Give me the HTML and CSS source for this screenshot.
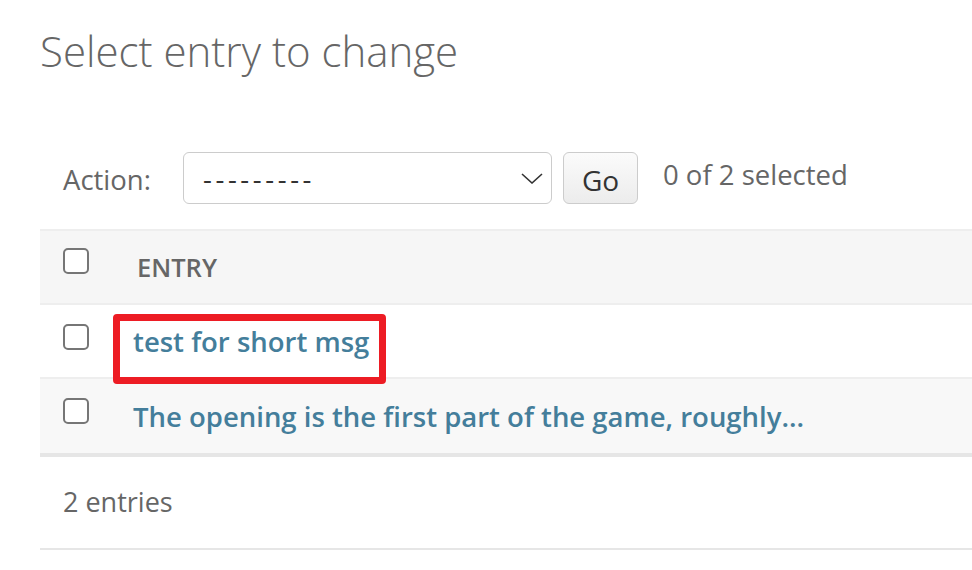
FILE: index.html
```html
<!DOCTYPE html>
<html>
<head>
<meta charset="utf-8">
<link rel="stylesheet" href="styles.css">
</head>
<body>
<div class="content">
  <h1 class="title">Select entry to change</h1>
  <div class="changelist">
    <div class="actions">
      <label class="action-label">Action:</label>
      <div class="select">
        <span class="select-text">---------</span>
        <svg class="chevron" width="22" height="11" viewBox="0 0 22 11"><path d="M1 1 L11 10 L21 1" fill="none" stroke="#333" stroke-width="1.6"/></svg>
      </div>
      <button class="go">Go</button>
      <span class="counter">0 of 2 selected</span>
    </div>
    <div class="results">
      <div class="row head">
        <div class="cb-cell"><span class="cb"></span></div>
        <div class="th">ENTRY</div>
      </div>
      <div class="row odd">
        <div class="cb-cell"><span class="cb"></span></div>
        <div class="td"><a class="link" href="#">test for short msg</a></div>
        <div class="highlight"></div>
      </div>
      <div class="row even last">
        <div class="cb-cell"><span class="cb"></span></div>
        <div class="td"><a class="link" href="#">The opening is the first part of the game, roughly...</a></div>
      </div>
    </div>
    <p class="paginator">2 entries</p>
  </div>
</div>
</body>
</html>
```
FILE: styles.css
```css
* { box-sizing: border-box; }
html, body { margin: 0; padding: 0; background: #fff; overflow: hidden; }
body {
  font-family: "Open Sans", "Noto Sans", sans-serif;
  color: #666;
  width: 972px;
  height: 570px;
}
.content {
  padding-left: 40px;
  width: 1100px;
}
.title {
  margin: 0;
  padding-top: 21px;
  height: 152px;
  font-weight: 300;
  font-size: 42px;
  line-height: 60px;
  color: #666;
}
.actions {
  display: flex;
  align-items: center;
  height: 52px;
  padding-left: 23px;
  margin-bottom: 25px;
}
.action-label {
  font-size: 27.5px;
  width: 120px;
  margin-top: 2px;
}
.select {
  width: 369px;
  height: 52px;
  border: 1.5px solid #ccc;
  border-radius: 6px;
  display: flex;
  align-items: center;
  justify-content: space-between;
  padding: 0 8px 0 19px;
}
.select-text {
  font-size: 27.5px;
  color: #333;
  letter-spacing: 3.6px;
}
.chevron { margin-top: 0; }
.go {
  margin-left: 11px;
  width: 75px;
  height: 52px;
  border: 1.5px solid #ccc;
  border-radius: 6px;
  background: linear-gradient(#fbfbfb, #ececec);
  font-family: inherit;
  font-size: 28px;
  color: #333;
  padding: 4px 0 0;
}
.counter {
  margin-left: 25px;
  font-size: 27.5px;
  margin-top: -8px;
}
.results { position: relative; }
.row {
  display: flex;
  align-items: center;
  height: 74px;
  border-bottom: 2px solid #eee;
  position: relative;
}
.row.head {
  background: #f6f6f6;
  border-top: 2px solid #eee;
  height: 76px;
}
.row.odd { background: #fff; }
.row.even { background: #f8f8f8; }
.row.last { border-bottom: 4px solid #e6e6e6; height: 78px; }
.cb-cell {
  width: 93px;
  padding-left: 23px;
  align-self: flex-start;
  padding-top: 19px;
}
.head .cb-cell { padding-top: 17px; }
.cb {
  display: block;
  width: 26px;
  height: 26px;
  border: 2.5px solid #767676;
  border-radius: 5px;
  background: #fff;
}
.th {
  font-size: 25.5px;
  font-weight: 600;
  color: #666;
  margin-left: 4px;
}
.link {
  font-size: 27.5px;
  font-weight: 600;
  color: #447e9b;
  text-decoration: none;
}
.highlight {
  position: absolute;
  left: 73px;
  top: 9px;
  width: 273px;
  height: 70px;
  border: 7px solid #ed1c24;
  border-radius: 4px;
  z-index: 2;
}
.paginator {
  margin: 0;
  height: 93px;
  line-height: 89px;
  padding-left: 23px;
  font-size: 27px;
  border-bottom: 2px solid #e6e6e6;
}
```
